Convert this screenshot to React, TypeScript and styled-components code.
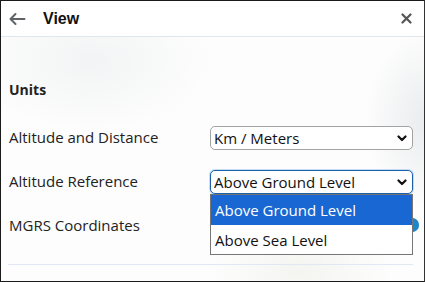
import React from "react";
import styled, { createGlobalStyle } from "styled-components";

const Global = createGlobalStyle`
  html, body { margin: 0; padding: 0; background: #fff; }
  body { font-family: "Open Sans", "Noto Sans", sans-serif; }
  * { box-sizing: border-box; }
`;

const Frame = styled.div`
  width: 425px;
  height: 282px;
  border: 1px solid #1a1a1a;
  border-right-color: #333;
  display: flex;
  flex-direction: column;
  background:
    radial-gradient(ellipse 60px 90px at 425px 120px, rgba(225,228,230,0.7), rgba(255,255,255,0) 100%),
    radial-gradient(ellipse 120px 70px at 90px 60px, rgba(235,237,238,0.6), rgba(255,255,255,0) 100%),
    radial-gradient(ellipse 90px 60px at 300px 270px, rgba(238,238,232,0.6), rgba(255,255,255,0) 100%),
    #fdfdfd;
  overflow: hidden;
`;

const Header = styled.div`
  height: 36px;
  flex: none;
  display: flex;
  align-items: center;
  padding: 0 12px 0 7px;
  background: #fff;
  border-bottom: 1px solid #dfe7ee;
`;

const Title = styled.div`
  margin-left: 17px;
  font-family: "Liberation Sans", Arial, sans-serif;
  font-weight: 700;
  font-size: 16px;
  color: #111;
  flex: 1;
`;

const IconBtn = styled.div`
  display: flex;
  align-items: center;
  justify-content: center;
`;

const Body = styled.div`
  flex: 1;
  padding: 44px 11px 0 7px;
  display: flex;
  flex-direction: column;
`;

const SectionTitle = styled.div`
  font-weight: 700;
  font-size: 14px;
  color: #222;
  line-height: 18px;
  margin-bottom: 18px;
  padding-left: 1px;
`;

const Row = styled.div`
  height: 44px;
  display: flex;
  align-items: center;
  justify-content: space-between;
  position: relative;
`;

const Label = styled.div`
  font-size: 15px;
  color: #222;
  padding-left: 1px;
  margin-top: -5px;
`;

const Select = styled.div<{ $focused?: boolean }>`
  width: 203px;
  height: 24px;
  border: 1px solid ${(p) => (p.$focused ? "#1c5fa8" : "#a3a3a3")};
  box-shadow: ${(p) => (p.$focused ? "0 0 0 1px rgba(160,200,240,0.6)" : "none")};
  border-radius: 5px;
  background: #fff;
  display: flex;
  align-items: center;
  justify-content: space-between;
  padding: 0 5px 0 3px;
  font-size: 15px;
  color: #111;
  margin-top: -2px;
`;

const Dropdown = styled.div`
  position: absolute;
  top: 33px;
  right: 0;
  width: 203px;
  border: 1px solid #767676;
  background: #fff;
  z-index: 3;
`;

const Option = styled.div<{ $active?: boolean }>`
  height: ${(p) => (p.$active ? "30px" : "29px")};
  display: flex;
  align-items: center;
  padding-left: 4px;
  font-size: 15px;
  background: ${(p) => (p.$active ? "#1967d2" : "#fff")};
  color: ${(p) => (p.$active ? "#fff" : "#111")};
`;

const Toggle = styled.div`
  position: absolute;
  right: -6px;
  top: 13px;
  width: 34px;
  height: 14px;
  border-radius: 7px;
  background: #8fbfe0;
`;

const Knob = styled.div`
  position: absolute;
  right: 0;
  top: 0;
  width: 14px;
  height: 14px;
  border-radius: 50%;
  background: #1f86c8;
`;

const Divider = styled.div`
  height: 1px;
  background: #dfe8f3;
  margin-top: 15px;
`;

const Chevron = () => (
  <svg width="10" height="7" viewBox="0 0 10 7">
    <path d="M1.5 1.5 L5 5 L8.5 1.5" fill="none" stroke="#111" strokeWidth="2.2" strokeLinecap="round" strokeLinejoin="round" />
  </svg>
);

export default function App() {
  return (
    <>
      <Global />
      <Frame>
        <Header>
          <IconBtn>
            <svg width="18" height="14" viewBox="0 0 18 14">
              <path d="M16.5 7 H2.5 M7.5 2 L2.5 7 L7.5 12" fill="none" stroke="#5f6368" strokeWidth="2" strokeLinecap="round" strokeLinejoin="round" />
            </svg>
          </IconBtn>
          <Title>View</Title>
          <IconBtn>
            <svg width="11" height="11" viewBox="0 0 11 11">
              <path d="M1.5 1.5 L9.5 9.5 M9.5 1.5 L1.5 9.5" stroke="#555" strokeWidth="2.2" strokeLinecap="round" />
            </svg>
          </IconBtn>
        </Header>
        <Body>
          <SectionTitle>Units</SectionTitle>
          <Row>
            <Label>Altitude and Distance</Label>
            <Select>
              Km / Meters
              <Chevron />
            </Select>
          </Row>
          <Row>
            <Label>Altitude Reference</Label>
            <Select $focused>
              Above Ground Level
              <Chevron />
            </Select>
            <Dropdown>
              <Option $active>Above Ground Level</Option>
              <Option>Above Sea Level</Option>
            </Dropdown>
          </Row>
          <Row>
            <Label>MGRS Coordinates</Label>
            <Toggle>
              <Knob />
            </Toggle>
          </Row>
          <Divider />
        </Body>
      </Frame>
    </>
  );
}
